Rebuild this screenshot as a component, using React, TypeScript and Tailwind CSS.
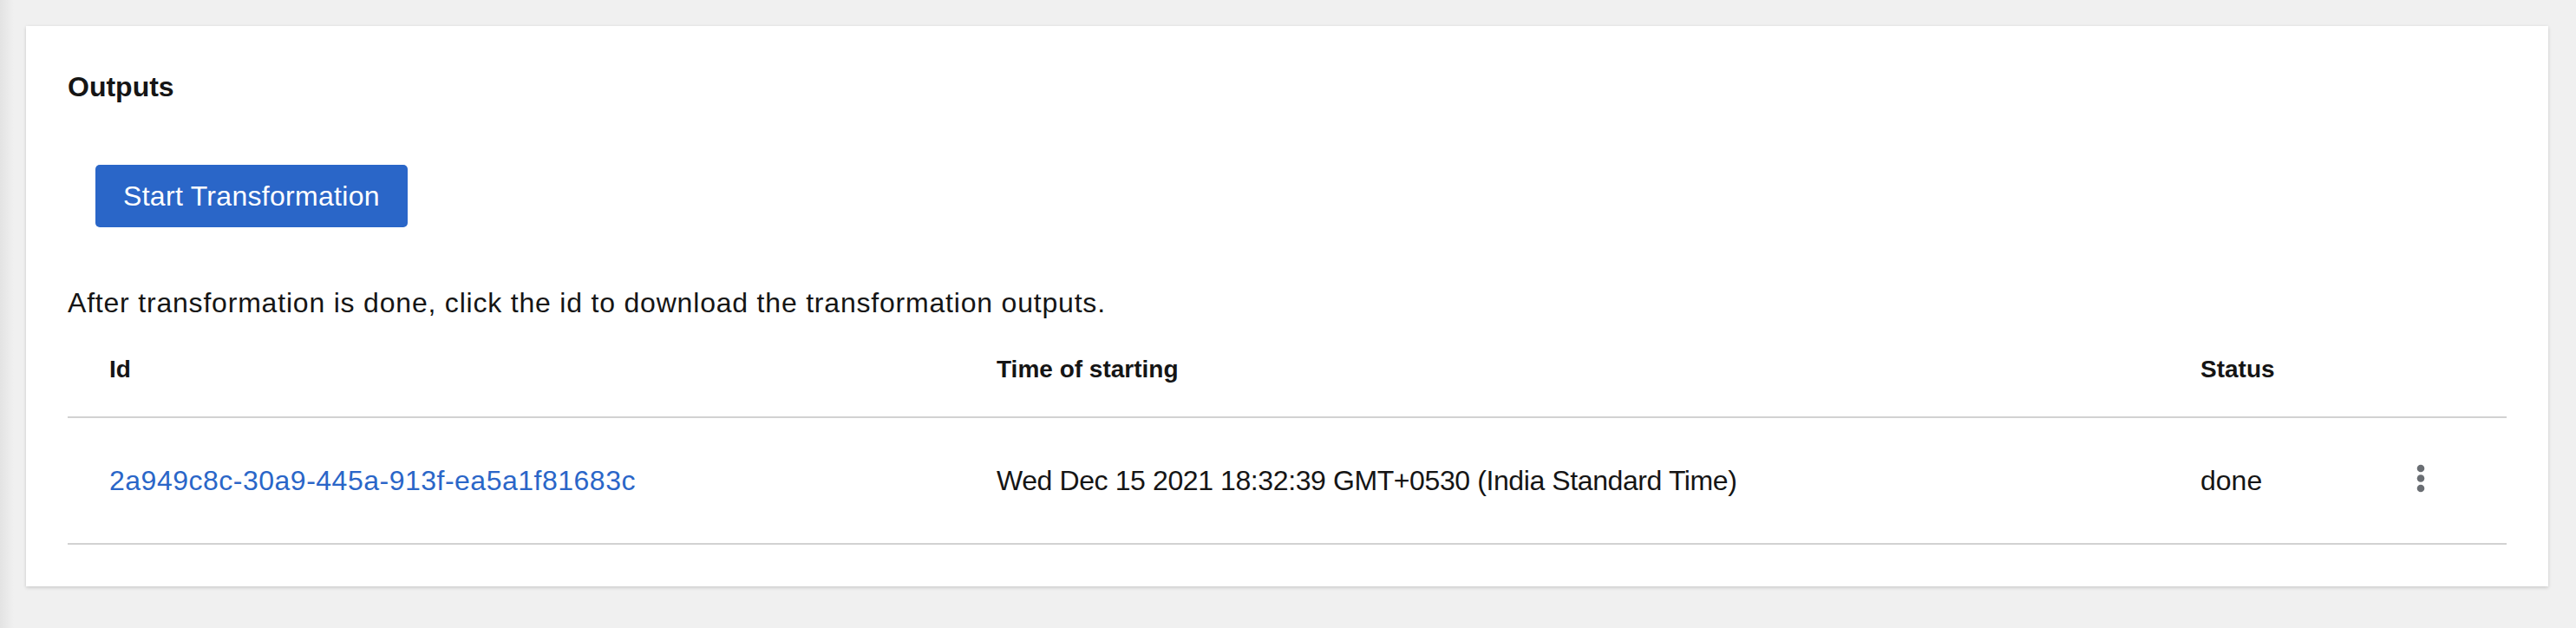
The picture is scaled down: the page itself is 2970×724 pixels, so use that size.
interface Output {
  id: string;
  startedAt: string;
  status: string;
}

const outputs: Output[] = [
  {
    id: '2a949c8c-30a9-445a-913f-ea5a1f81683c',
    startedAt: 'Wed Dec 15 2021 18:32:39 GMT+0530 (India Standard Time)',
    status: 'done',
  },
];

function Kebab() {
  return (
    <svg width="10" height="34" viewBox="0 0 10 34" className="block">
      <circle cx="5" cy="5" r="4.3" fill="#6a6e73" />
      <circle cx="5" cy="16.5" r="4.3" fill="#6a6e73" />
      <circle cx="5" cy="28" r="4.3" fill="#6a6e73" />
    </svg>
  );
}

export default function App() {
  return (
    <div className="flex min-h-screen bg-[#f0f0f0] text-[#151515] font-['Liberation_Sans',Arial,sans-serif]">
      {/* sidebar shadow edge */}
      <div className="w-[16px] shrink-0 bg-gradient-to-r from-[#e3e3e3] to-[#f0f0f0]" />

      <main className="flex-1 pl-[14px] pr-[32px] pt-[30px] pb-[48px]">
        <section className="bg-white px-[48px] pt-[46px] pb-[48px] shadow-[0_2px_4px_rgba(3,3,3,0.12),0_0_4px_rgba(3,3,3,0.06)]">
          <h2 className="text-[32px] leading-[48px] font-bold">Outputs</h2>

          <div className="mt-[66px] pl-[32px]">
            <button className="h-[72px] rounded-[5px] bg-[#2a66c8] px-[32px] text-[32px] leading-[48px] tracking-[0.3px] text-white">
              Start Transformation
            </button>
          </div>

          <p className="mt-[63px] text-[32px] leading-[48px] tracking-[0.8px]">
            After transformation is done, click the id to download the transformation outputs.
          </p>

          <div className="grid grid-cols-[1039px_1388px_231px_1fr]">
            <div className="pl-[48px] pt-[32px] pb-[33px] text-[28px] leading-[42px] font-bold border-b-2 border-[#d2d2d2]">
              Id
            </div>
            <div className="pl-[32px] pt-[32px] pb-[33px] text-[28px] leading-[42px] font-bold border-b-2 border-[#d2d2d2]">
              Time of starting
            </div>
            <div className="pl-[32px] pt-[32px] pb-[33px] text-[28px] leading-[42px] font-bold border-b-2 border-[#d2d2d2]">
              Status
            </div>
            <div className="border-b-2 border-[#d2d2d2]" />

            {outputs.map((o) => (
              <div key={o.id} className="contents">
                <div className="flex h-[146px] items-center pl-[48px] border-b-2 border-[#d2d2d2]">
                  <a href="#" className="text-[32px] leading-[48px] tracking-[0.5px] text-[#2a66c8]">
                    {o.id}
                  </a>
                </div>
                <div className="flex h-[146px] items-center pl-[32px] border-b-2 border-[#d2d2d2] text-[32px] leading-[48px] tracking-[-0.4px]">
                  {o.startedAt}
                </div>
                <div className="flex h-[146px] items-center pl-[32px] border-b-2 border-[#d2d2d2] text-[32px] leading-[48px]">
                  {o.status}
                </div>
                <div className="flex h-[146px] items-center pl-[50px] border-b-2 border-[#d2d2d2]">
                  <button aria-label="Actions" className="-mt-[4px]">
                    <Kebab />
                  </button>
                </div>
              </div>
            ))}
          </div>
        </section>
      </main>
    </div>
  );
}
